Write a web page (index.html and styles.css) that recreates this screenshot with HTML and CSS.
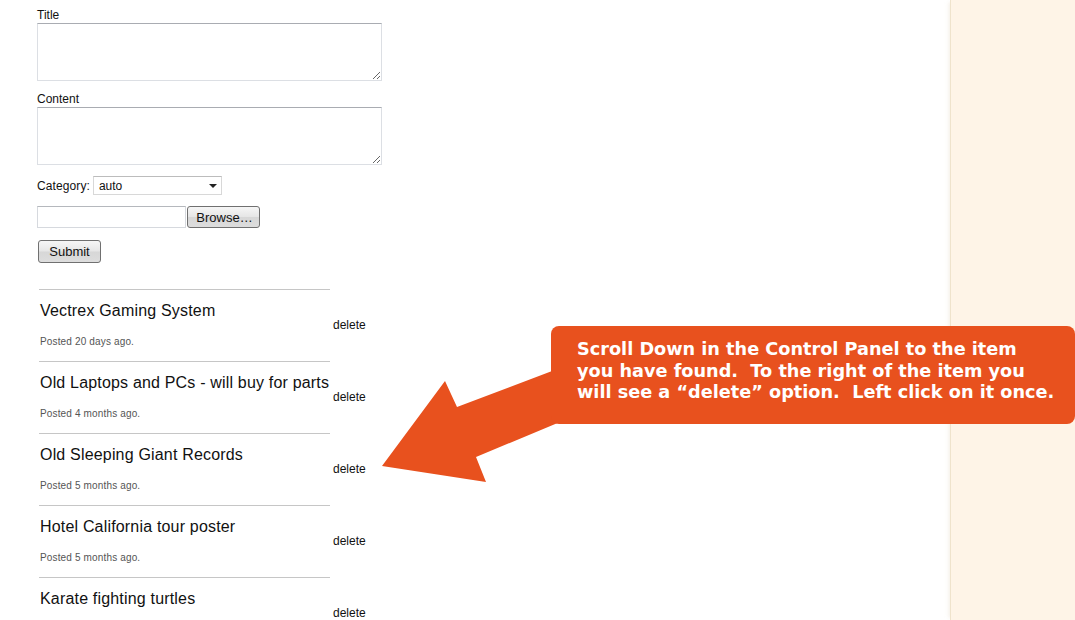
FILE: index.html
```html
<!DOCTYPE html>
<html>
<head>
<meta charset="utf-8">
<title>Control Panel</title>
<link rel="stylesheet" href="styles.css">
</head>
<body>
<div class="page">
  <main class="main">
    <form class="form">
      <label class="lbl lbl-first">Title</label>
      <textarea class="ta"></textarea>
      <label class="lbl">Content</label>
      <textarea class="ta"></textarea>
      <div class="cat-row">
        <span class="cat-label">Category:</span>
        <span class="sel-wrap">
          <select class="sel"><option>auto</option></select>
        </span>
      </div>
      <div class="file-row">
        <input class="file-box" type="text" readonly>
        <button type="button" class="btn btn-browse">Browse…</button>
      </div>
      <div class="submit-row">
        <button type="button" class="btn btn-submit">Submit</button>
      </div>
    </form>

    <div class="list">
      <div class="item">
        <div class="info">
          <div class="item-title">Vectrex Gaming System</div>
          <div class="posted">Posted 20 days ago.</div>
        </div>
        <a class="del">delete</a>
      </div>
      <div class="item">
        <div class="info">
          <div class="item-title">Old Laptops and PCs - will buy for parts</div>
          <div class="posted">Posted 4 months ago.</div>
        </div>
        <a class="del">delete</a>
      </div>
      <div class="item">
        <div class="info">
          <div class="item-title">Old Sleeping Giant Records</div>
          <div class="posted">Posted 5 months ago.</div>
        </div>
        <a class="del">delete</a>
      </div>
      <div class="item">
        <div class="info">
          <div class="item-title">Hotel California tour poster</div>
          <div class="posted">Posted 5 months ago.</div>
        </div>
        <a class="del">delete</a>
      </div>
      <div class="item">
        <div class="info">
          <div class="item-title">Karate fighting turtles</div>
        </div>
        <a class="del">delete</a>
      </div>
    </div>
  </main>
  <aside class="side"></aside>
</div>

<svg class="arrow" width="1075" height="620" viewBox="0 0 1075 620">
  <polygon points="382,466 445,381 457,407 560,368 560,422 476,457 486,482" fill="#e8511e"/>
</svg>
<div class="callout">Scroll Down in the Control Panel to the item
you have found.  To the right of the item you
will see a “delete” option.  Left click on it once.</div>
</body>
</html>
```
FILE: styles.css
```css
html, body {
  margin: 0;
  padding: 0;
  height: 100%;
  overflow: hidden;
  background: #ffffff;
  font-family: "Liberation Sans", Arial, sans-serif;
  color: #111;
}

.page {
  display: flex;
  height: 620px;
}

.main {
  flex: 1;
  padding-left: 37px;
}

.side {
  width: 124px;
  background: #fef4e7;
  border-left: 1px solid #efe3cc;
  box-shadow: -3px 0 4px -2px rgba(220, 205, 180, 0.35);
}

.form {
  display: flex;
  flex-direction: column;
  align-items: flex-start;
}

.lbl {
  display: block;
  font-size: 12px;
  line-height: 14px;
  margin-top: 11px;
  height: 14px;
}

.lbl-first {
  margin-top: 8px;
}

.ta {
  display: block;
  box-sizing: border-box;
  width: 345px;
  height: 58px;
  margin: 1px 0 0 0;
  border: 1px solid #dcdfe4;
  border-top-color: #a9acb2;
  background: #fff;
  font-family: "Liberation Sans", Arial, sans-serif;
  font-size: 12px;
}

.cat-row {
  display: flex;
  align-items: center;
  margin-top: 11px;
  height: 19px;
  font-size: 12px;
}

.cat-label {
  margin-right: 3px;
  letter-spacing: 0.1px;
}

.sel-wrap {
  position: relative;
  display: inline-block;
}

.sel-wrap::after {
  content: "";
  position: absolute;
  right: 5px;
  top: 8px;
  border-left: 4px solid transparent;
  border-right: 4px solid transparent;
  border-top: 4px solid #222;
  pointer-events: none;
}

.sel {
  -webkit-appearance: none;
  appearance: none;
  box-sizing: border-box;
  width: 129px;
  height: 19px;
  padding: 0 0 0 5px;
  border: 1px solid #d8d8d8;
  border-top-color: #bcbcbc;
  border-radius: 0;
  background: #fff;
  font-family: "Liberation Sans", Arial, sans-serif;
  font-size: 12px;
  color: #111;
}

.file-row {
  display: flex;
  align-items: flex-start;
  margin-top: 11px;
}

.file-box {
  box-sizing: border-box;
  width: 149px;
  height: 22px;
  margin: 0;
  border: 1px solid #d6d9de;
  border-top-color: #b5b8bd;
  background: #fff;
}

.btn {
  box-sizing: border-box;
  margin: 0;
  padding: 0;
  border: 1px solid #707070;
  border-radius: 3px;
  background: linear-gradient(#f6f6f6 0%, #e6e6e6 48%, #d7d7d7 52%, #dddddd 100%);
  font-family: "Liberation Sans", Arial, sans-serif;
  font-size: 13px;
  color: #111;
}

.btn-browse {
  width: 73px;
  height: 22px;
  margin-left: 1px;
  padding-left: 2px;
}

.submit-row {
  margin-top: 12px;
  margin-left: 1px;
}

.btn-submit {
  width: 63px;
  height: 23px;
}

.list {
  margin-top: 26px;
  margin-left: 2px;
}

.item {
  display: flex;
  align-items: center;
  height: 72px;
}

.info {
  box-sizing: border-box;
  width: 291px;
  height: 72px;
  border-top: 1px solid #c6c6c6;
  padding: 11px 0 0 1px;
}

.item-title {
  font-size: 16px;
  line-height: 20px;
  letter-spacing: 0.18px;
  color: #111;
  white-space: nowrap;
}

.posted {
  margin-top: 15px;
  font-size: 10px;
  line-height: 12px;
  letter-spacing: 0.15px;
  color: #555;
}

.del {
  margin-left: 3px;
  font-size: 12px;
  line-height: 14px;
  color: #111;
}

.arrow {
  position: absolute;
  left: 0;
  top: 0;
  pointer-events: none;
}

.callout {
  position: absolute;
  left: 551px;
  top: 326px;
  width: 524px;
  height: 98px;
  box-sizing: border-box;
  padding: 13px 0 0 26px;
  background: #e8511e;
  border-radius: 8px;
  color: #fff;
  font-family: "DejaVu Sans", Verdana, sans-serif;
  font-weight: bold;
  font-size: 17.7px;
  line-height: 21.5px;
  white-space: pre;
}
```
